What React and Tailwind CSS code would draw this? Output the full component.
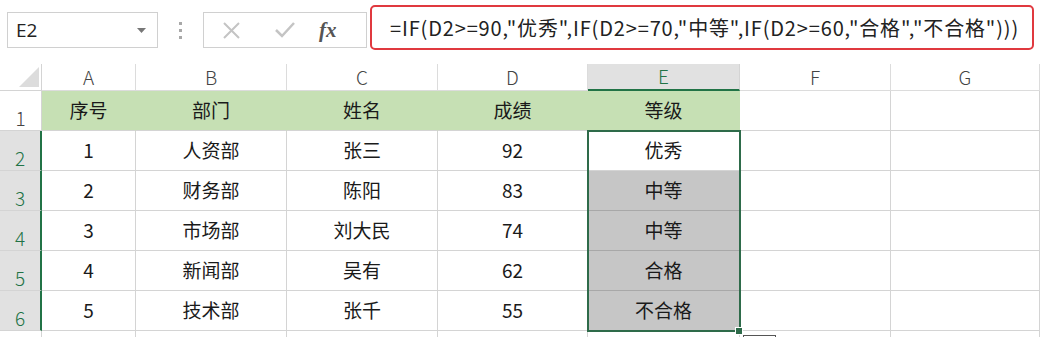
import React from 'react';

const font = { fontFamily: '"Noto Sans CJK SC", "Noto Sans", sans-serif' };

const colLetters = ['A', 'B', 'C', 'D', 'E', 'F', 'G'];

const rows = [
  ['序号', '部门', '姓名', '成绩', '等级'],
  ['1', '人资部', '张三', '92', '优秀'],
  ['2', '财务部', '陈阳', '83', '中等'],
  ['3', '市场部', '刘大民', '74', '中等'],
  ['4', '新闻部', '吴有', '62', '合格'],
  ['5', '技术部', '张千', '55', '不合格'],
];

function FormulaBar() {
  return (
    <div className="flex items-start h-[64px] pl-[7px]">
      {/* name box */}
      <div className="mt-[12px] w-[151px] h-[36px] border border-[#d0d0d0] flex items-center justify-between pl-[8px] pr-[11px]">
        <span className="text-[19px] text-[#222] font-['Open_Sans']">E2</span>
        <svg width="9" height="5" viewBox="0 0 9 5">
          <path d="M0 0 L9 0 L4.5 5 Z" fill="#777" />
        </svg>
      </div>
      <div className="mt-[22px] ml-[21px] flex flex-col gap-[4px]">
        <div className="w-[3px] h-[3px] bg-[#a8a8a8]" />
        <div className="w-[3px] h-[3px] bg-[#a8a8a8]" />
        <div className="w-[3px] h-[3px] bg-[#a8a8a8]" />
      </div>
      {/* cancel / enter / fx */}
      <div className="mt-[12px] ml-[21px] w-[164px] h-[36px] border border-[#d0d0d0] flex items-center">
        <svg className="ml-[19px]" width="17" height="17" viewBox="0 0 17 17">
          <path d="M1 1 L16 16 M16 1 L1 16" stroke="#c4c4c4" strokeWidth="2" />
        </svg>
        <svg className="ml-[35px]" width="20" height="16" viewBox="0 0 20 16">
          <path d="M1 8 L7 14 L19 1" stroke="#c4c4c4" strokeWidth="2.5" fill="none" />
        </svg>
        <span className="ml-[24px] italic text-[21px] text-[#555] font-['Liberation_Serif'] font-bold leading-none">fx</span>
      </div>
      {/* formula */}
      <div className="mt-[5px] ml-[3px] w-[664px] h-[45px] border-2 border-[#e0393f] rounded-[5px] flex items-center pl-[18px]">
        <span className="text-[20px] text-[#222] tracking-[0.85px] whitespace-nowrap" style={font}>
          =IF(D2&gt;=90,"优秀",IF(D2&gt;=70,"中等",IF(D2&gt;=60,"合格","不合格")))
        </span>
      </div>
    </div>
  );
}

function Sheet() {
  return (
    <div className="relative">
      <div className="grid grid-cols-[42px_94px_151px_151px_150px_152px_151px_149px] grid-rows-[27px_40px_40px_40px_40px_40px_40px_40px]" style={font}>
        {/* corner */}
        <div className="border-r border-b border-[#d4d4d4] flex items-end justify-end pr-[2px] pb-[3px]">
          <svg width="20" height="20" viewBox="0 0 20 20">
            <path d="M20 0 L20 20 L0 20 Z" fill="#dcdcdc" />
          </svg>
        </div>
        {colLetters.map((c) => (
          <div
            key={c}
            className={
              c === 'E'
                ? 'bg-[#e1e1e1] border-b-2 border-b-[#217346] border-r border-r-[#d4d4d4] flex items-center justify-center text-[19px] text-[#217346] font-light'
                : 'border-r border-b border-[#dcdcdc] flex items-center justify-center text-[19px] text-[#444] font-light'
            }
          >
            {c}
          </div>
        ))}

        {rows.map((r, ri) => (
          <React.Fragment key={ri}>
            <div
              className={
                ri === 0
                  ? 'border-r border-b border-[#d4d4d4] flex items-end justify-center text-[19px] text-[#444] font-light leading-none pb-[3px]'
                  : 'bg-[#e1e1e1] border-r-2 border-r-[#217346] border-b border-b-[#d4d4d4] flex items-end justify-center text-[19px] text-[#217346] font-light leading-none pb-[3px]'
              }
            >
              {ri + 1}
            </div>
            {r.map((v, ci) => {
              let cls = 'flex items-center justify-center text-[19px] text-[#1a1a1a] border-b border-[#d4d4d4] border-r';
              if (ri === 0) cls += ' bg-[#c6e0b4] border-r-[#c6e0b4]';
              else if (ci === 4 && ri > 1) cls += ' bg-[#c6c6c6] border-b-[#a8a8a8] border-r-[#c6c6c6]';
              return (
                <div key={ci} className={cls}>
                  {v}
                </div>
              );
            })}
            <div className="border-r border-b border-[#d4d4d4]" />
            <div className="border-r border-b border-[#d4d4d4]" />
          </React.Fragment>
        ))}

        {/* row 7, mostly cut off */}
        <div className="bg-white border-r border-[#d4d4d4]" />
        {colLetters.map((c) => (
          <div key={c} className="border-r border-[#d4d4d4]" />
        ))}
      </div>

      {/* selection E2:E6 */}
      <div className="absolute left-[587px] top-[66px] w-[154px] h-[202px] border-2 border-[#2e6b4a] pointer-events-none" />
      <div className="absolute left-[735px] top-[263px] w-[8px] h-[8px] bg-[#2e6b4a] border border-white" />
      <div className="absolute left-[743px] top-[271px] w-[33px] h-[12px] border border-[#555] bg-white" />
    </div>
  );
}

export default function App() {
  return (
    <div className="w-[1040px] h-[337px] bg-white overflow-hidden">
      <FormulaBar />
      <Sheet />
    </div>
  );
}
